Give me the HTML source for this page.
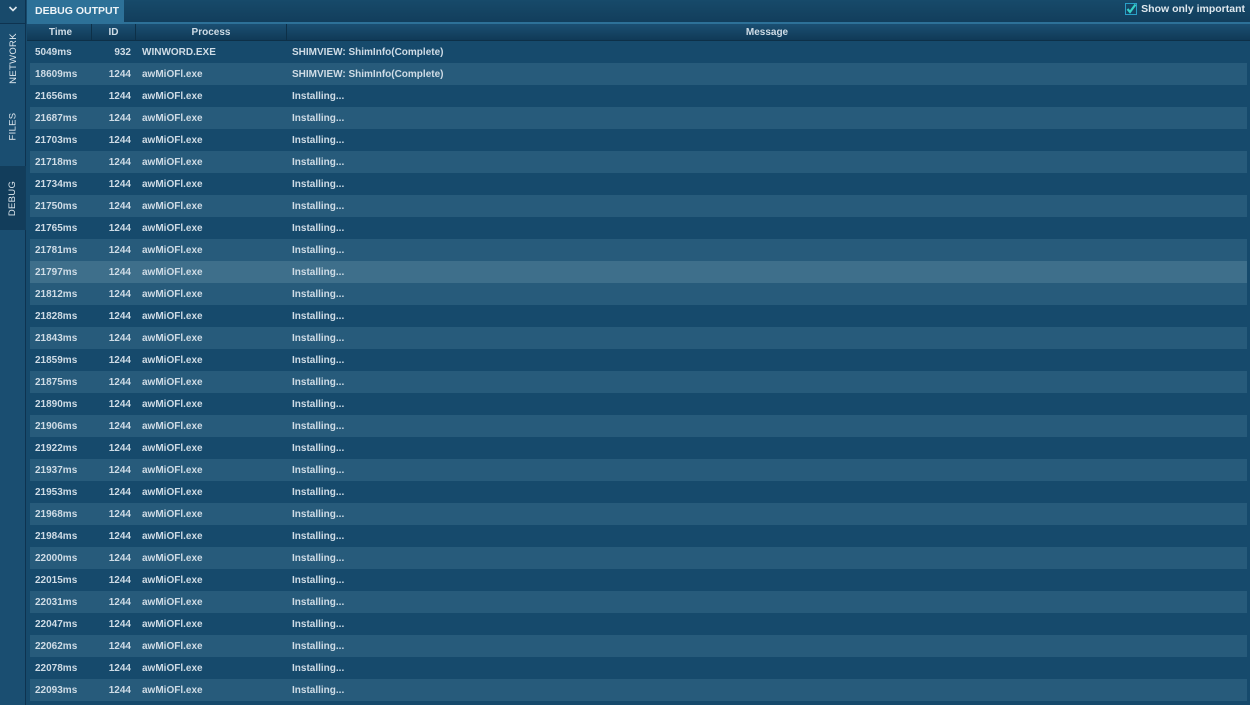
<!DOCTYPE html>
<html><head><style>
*{margin:0;padding:0;box-sizing:border-box}
body{width:1250px;height:705px;background:#164a6c;font-family:"Liberation Sans",sans-serif;font-weight:bold;font-size:10px;color:#cfdce6;position:relative;overflow:hidden}
#side{position:absolute;left:0;top:0;width:26px;height:705px;background:#1a4e71;border-right:1px solid #0e3350}
#side .top{height:24px;background:#184a6b;border-bottom:1px solid #0e3350;text-align:center;padding-top:5px}
.vt{position:absolute;left:0;width:26px;display:flex;align-items:center;justify-content:center}
.vt span{transform:rotate(-90deg);white-space:nowrap;font-size:9.5px;color:#dfe8ee;font-weight:normal;letter-spacing:.3px}
#topbar{position:absolute;left:27px;top:0;right:0;height:22px;background:linear-gradient(#174a6a,#123e5c)}
#tab{position:absolute;left:27px;top:0;width:97px;height:24px;background:#2d7198;color:#eef4f8;padding:5px 0 0 8px;font-size:10.5px}
#line{position:absolute;left:27px;top:22px;right:0;height:2px;background:#2d7198}
#hdr{position:absolute;left:27px;top:24px;right:0;height:17px;background:linear-gradient(#1b4f72,#103a57);border-bottom:1px solid #0d3048}
.h{position:absolute;text-align:center;border-right:1px solid #0d3048;height:16px;top:0;padding-top:3px}
.row{position:absolute;left:30px;width:1217px;height:22px}
.row span{position:absolute;top:6px}
.a{background:#164a6c}.b{background:#275b7b}.s{background:#3e6f8b}
#cb{position:absolute;right:5px;top:3px;display:flex;align-items:center;color:#dfe8ee;font-size:10.5px}
#cb i{display:inline-block;width:12px;height:12px;border:1px solid #2aa0c8;margin-right:4px;position:relative}
</style></head><body>
<div id="topbar"></div>
<div id="side"><div class="top"><svg width="10" height="8" viewBox="0 0 10 8"><path d="M1.5 2 L5 5.5 L8.5 2" stroke="#dfe8ee" stroke-width="1.6" fill="none"/></svg></div>
<div class="vt" style="top:30px;height:56px"><span>NETWORK</span></div>
<div class="vt" style="top:100px;height:52px"><span>FILES</span></div>
<div class="vt" style="top:166px;height:64px;background:#123d5b"><span>DEBUG</span></div>
</div>
<div id="tab">DEBUG OUTPUT</div>
<div id="line"></div>
<div id="cb"><i><svg width="12" height="12" viewBox="0 0 12 12" style="position:absolute;left:-1px;top:-1px"><path d="M2.5 6 L5 9 L10.5 1.5" stroke="#35d0c8" stroke-width="2.2" fill="none"/></svg></i>Show only important</div>
<div id="hdr">
<div class="h" style="left:3px;width:62px">Time</div>
<div class="h" style="left:65px;width:44px">ID</div>
<div class="h" style="left:109px;width:151px">Process</div>
<div class="h" style="left:260px;width:960px;border:none">Message</div>
</div>
<div id="rows"></div>
<script>
var t=["5049","18609","21656","21687","21703","21718","21734","21750","21765","21781","21797","21812","21828","21843","21859","21875","21890","21906","21922","21937","21953","21968","21984","22000","22015","22031","22047","22062","22078","22093"];
var h="";
t.forEach(function(v,i){
var c=i==10?"s":(i%2?"b":"a");
var id=i==0?"932":"1244",p=i==0?"WINWORD.EXE":"awMiOFl.exe",m=i<2?"SHIMVIEW: ShimInfo(Complete)":"Installing...";
h+='<div class="row '+c+'" style="top:'+(41+22*i)+'px"><span style="left:5px">'+v+'ms</span><span style="right:1116px">'+id+'</span><span style="left:112px">'+p+'</span><span style="left:262px">'+m+'</span></div>';
});
document.getElementById("rows").innerHTML=h;
</script>
</body></html>
